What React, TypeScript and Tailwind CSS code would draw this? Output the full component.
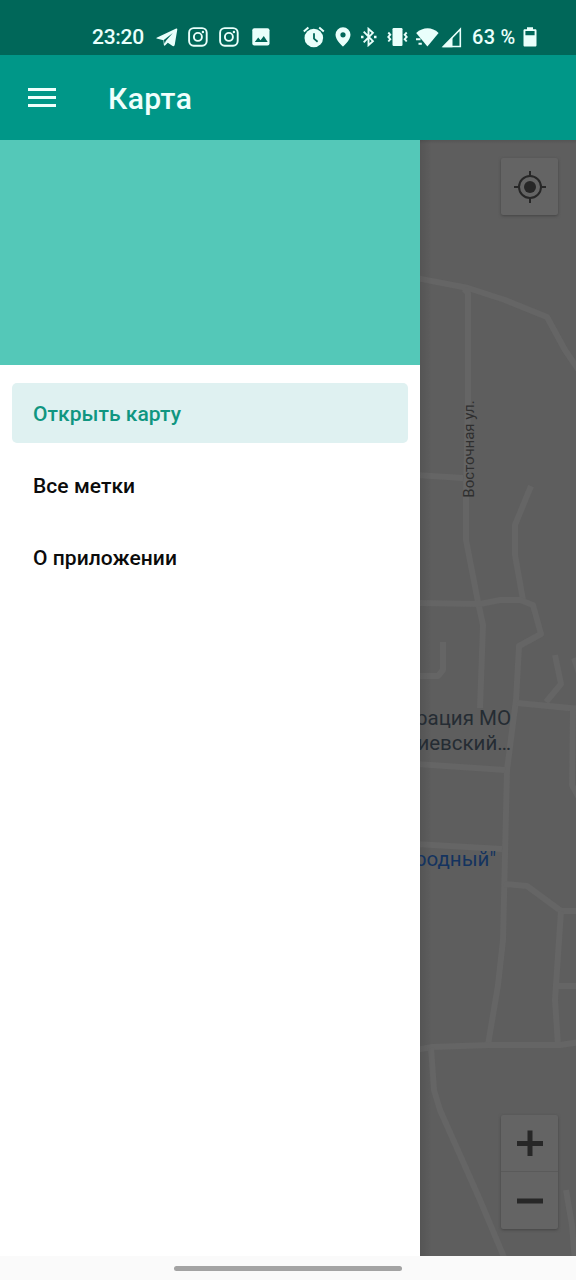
import React from 'react';

const roads = [
  'M416 278 L468 288 L505 300 L547 317 L565 350 L580 372',
  'M464 289 L468 293 L468 400 L466 497 L466 540 L478 602 L483 625 L480 708',
  'M416 475 L463 478',
  'M531 486 L515 525 L515 555 L523 600',
  'M416 603 L480 604 L500 600 L520 600 L533 605 L541 634 L519 646 L516 700 L507 770 L503 940 L498 985 L488 1045',
  'M443 642 L443 670 L438 676 L416 676',
  'M555 655 L561 684 L546 702',
  'M517 703 L580 709',
  'M573 708 L572 785 L580 800',
  'M574 658 L580 676',
  'M416 764 L505 770',
  'M416 844 L502 849',
  'M504 884 L527 886 L561 911 L580 911',
  'M561 911 L556 985 L555 1000 L558 1045',
  'M556 986 L580 986',
  'M416 1050 L432 1047 L490 1045 L560 1045 L580 1042',
  'M431 1048 L434 1090 L440 1110 L480 1200 L506 1262',
  'M566 1190 L572 1225 L575 1262',
];

function Instagram() {
  return (
    <svg className="block h-5 w-5" viewBox="0 0 20 20" fill="none" stroke="currentColor">
      <rect x="1.1" y="1.1" width="17.6" height="17.6" rx="4.6" strokeWidth="1.9" />
      <circle cx="9.9" cy="9.9" r="4" strokeWidth="1.9" />
      <circle cx="14.9" cy="5" r="1.2" fill="currentColor" stroke="none" />
    </svg>
  );
}

function StatusBar() {
  return (
    <div className="flex h-[55px] shrink-0 items-center bg-[#006759] pt-[19px] pl-[92px] text-[#e9fffb]">
      <span className="w-[64px] text-[21px] leading-6 font-medium tracking-[-0.3px]">23:20</span>
      <svg className="block h-[19px] w-[22px]" viewBox="0 0 22 19" fill="currentColor">
        <path d="M.6 9.700 20.200.6c.7-.3 1.200.1 1.100.9l-2.600 15.600c-.2 1.100-1.200 1.400-2.100.8l-4.800-3.200-2.500 2.600c-.7.700-1.400.5-1.500-.5l-.3-4.600L.7 10.500c-.5-.2-.5-.6-.1-.8Z" />
        <path d="m7.800 11.900 9-7-7 8.200-1.100 2.600Z" fill="#006759" />
      </svg>
      <div className="ml-[10px]"><Instagram /></div>
      <div className="ml-[11px]"><Instagram /></div>
      <svg className="ml-[13px] block h-[18px] w-[18px]" viewBox="0 0 18 18">
        <rect x=".3" y=".3" width="17.200" height="17.200" rx="2" fill="currentColor" />
        <path d="m2.800 14 3.400-4.600 2.300 2.800 3.300-4.300 3.900 6.100Z" fill="#006759" />
      </svg>
      <svg className="ml-[33px] block h-[22px] w-[22px]" viewBox="0 0 22 22" fill="none" stroke="currentColor">
        <circle cx="10.800" cy="12" r="9.300" fill="currentColor" stroke="none" />
        <path d="M.8 5.500 5.400 1.500M20.800 5.500 16.200 1.500" strokeWidth="2" />
        <path d="M11 7.300v5.400l3.600 3" stroke="#006759" strokeWidth="1.800" />
      </svg>
      <svg className="ml-[10px] block h-5 w-4" viewBox="0 0 16 20" fill="currentColor">
        <path fillRule="evenodd" d="M8 .3A7.500 7.500 0 0 0 .5 7.800C.5 13.200 8 19.700 8 19.700s7.500-6.500 7.500-11.900A7.500 7.500 0 0 0 8 .3Zm0 4.900a2.600 2.600 0 1 1 0 5.200 2.600 2.600 0 0 1 0-5.200Z" />
      </svg>
      <svg className="ml-[9px] block h-5 w-[18px]" viewBox="0 0 18 20" fill="none" stroke="currentColor" strokeWidth="1.900">
        <path d="m3.700 4.700 9.200 9.400-4.400 4V1.900l4.400 4-9.200 9.400" />
        <path d="M1 10h2.500M14 10h2.500" strokeWidth="2.500" />
      </svg>
      <svg className="ml-[9px] block h-5 w-[21px]" viewBox="0 0 21 20" fill="none" stroke="currentColor" strokeWidth="1.900">
        <rect x="5.500" y="1" width="10" height="18" rx="1.200" fill="currentColor" stroke="none" />
        <path d="M1.300 5.500 3.300 7.700 1.300 10l2 2.200-2 2.300M19.700 5.500 17.700 7.700l2 2.300-2 2.200 2 2.300" />
      </svg>
      <svg className="ml-[7px] block h-5 w-6" viewBox="0 0 24 20" fill="currentColor">
        <path d="M1.200 6C8.200-.2 17-.2 23.600 6L12.400 19.500Z" />
        <path d="M1 12.300h4.500M3.500 16.800h3.300" stroke="currentColor" strokeWidth="1.900" />
      </svg>
      <svg className="ml-[2px] block h-[21px] w-[21px]" viewBox="0 0 21 21">
        <path d="M19.300 2.200v17.300H2.500Z" fill="none" stroke="currentColor" strokeWidth="1.600" />
        <path d="M11.500 10.200v10H1.500Z" fill="currentColor" />
      </svg>
      <span className="ml-[10px] w-[50px] whitespace-nowrap text-[20px] leading-6 font-medium tracking-[0.3px]">63 %</span>
      <svg className="ml-[1px] block h-5 w-[14px]" viewBox="0 0 14 20" fill="currentColor">
        <path fillRule="evenodd" d="M4 .2h6v2h2.100c.9 0 1.400.5 1.400 1.400v14.600c0 .9-.5 1.400-1.400 1.400H1.900c-.9 0-1.400-.5-1.400-1.400V3.600c0-.9.5-1.400 1.400-1.400H4ZM2.400 4v4.300h9.200V4Z" />
      </svg>
    </div>
  );
}

function MapView() {
  return (
    <div className="relative flex flex-1 flex-col items-end justify-between overflow-hidden bg-[#5e5e5e] pt-[18px] pr-[18px] pb-[27px]">
      <svg className="absolute inset-0 h-[1116px] w-[156px]" viewBox="420 140 156 1116" fill="none" stroke="#656565" strokeWidth="6" strokeLinejoin="round">
        {roads.map((d) => <path key={d} d={d} />)}
      </svg>
      <div className="absolute inset-y-0 left-0 w-3 bg-linear-to-r from-black/10 to-transparent" />
      <div className="absolute inset-x-0 top-0 h-1 bg-linear-to-b from-black/10 to-transparent" />
      <span className="absolute top-[301px] left-[49px] -translate-x-1/2 -translate-y-1/2 pt-[16px]">
        <span className="block -rotate-90 whitespace-nowrap text-[15px] leading-4 tracking-[-0.02px] text-[#2f2f2f]">Восточная ул.</span>
      </span>
      <div className="absolute top-[566px] right-[65px] text-right text-[20.5px] leading-[25px] whitespace-nowrap text-[#252c33]">
        <div>рация МО</div>
        <div>иевский…</div>
      </div>
      <div className="absolute top-[707px] right-[80px] text-[20.5px] leading-[25px] whitespace-nowrap text-[#14335f]">родный&quot;</div>
      <button aria-label="Моё местоположение" className="relative flex h-[57px] w-[57px] items-center justify-center rounded-[2px] bg-[#646464] shadow-[0_1px_3px_#454545]">
        <svg className="block h-8 w-8" viewBox="0 0 32 32" fill="none" stroke="#272727" strokeWidth="2">
          <circle cx="16" cy="16" r="11" />
          <circle cx="16" cy="16" r="6" fill="#272727" stroke="none" />
          <path d="M16 0v5M16 27v5M0 16h5M27 16h5" />
        </svg>
      </button>
      <div className="relative w-[57px] rounded-[2px] bg-[#646464] shadow-[0_1px_3px_#454545]">
        <button aria-label="Приблизить" className="flex h-[57px] w-full items-center justify-center border-b border-[#5a5a5a]">
          <svg className="block h-[26px] w-[26px]" viewBox="0 0 26 26" stroke="#272727" strokeWidth="5"><path d="M0 13.500h26M13 .5v26" /></svg>
        </button>
        <button aria-label="Отдалить" className="flex h-[57px] w-full items-center justify-center">
          <svg className="block h-[26px] w-[26px]" viewBox="0 0 26 26" stroke="#272727" strokeWidth="5"><path d="M0 13h26" /></svg>
        </button>
      </div>
    </div>
  );
}

export default function App() {
  return (
    <div className="flex h-[1280px] w-[576px] flex-col overflow-hidden bg-white font-['Roboto','Noto_Sans',sans-serif]">
      <StatusBar />
      <header className="flex h-[85px] shrink-0 items-center bg-[#009788] pl-7 text-[#effffc]">
        <button aria-label="Меню" className="flex w-7 flex-col gap-[5px]">
          <span className="h-[3px] bg-current" />
          <span className="h-[3px] bg-current" />
          <span className="h-[3px] bg-current" />
        </button>
        <h1 className="ml-[52px] pt-[3px] text-[30px] leading-9 font-medium tracking-[0.4px]">Карта</h1>
      </header>
      <main className="flex h-[1116px] shrink-0">
        <aside className="w-[420px] shrink-0 bg-white">
          <div className="h-[225px] bg-[#54c8b8]" />
          <nav className="flex flex-col gap-3 px-3 pt-[18px] text-[21px] font-medium tracking-[0.05px] text-[#0b0b0b]">
            <a className="flex h-[60px] items-center rounded-[5px] bg-[#dff1f1] pl-[21px] pt-[4px] text-[#109681]">Открыть карту</a>
            <a className="flex h-[60px] items-center pl-[21px] pt-[4px]">Все метки</a>
            <a className="flex h-[60px] items-center pl-[21px] pt-[4px]">О приложении</a>
          </nav>
        </aside>
        <MapView />
      </main>
      <footer className="flex h-6 items-center justify-center bg-[#fafafa]">
        <div className="h-[5px] w-[228px] rounded-full bg-[#a3a3a3]" />
      </footer>
    </div>
  );
}
